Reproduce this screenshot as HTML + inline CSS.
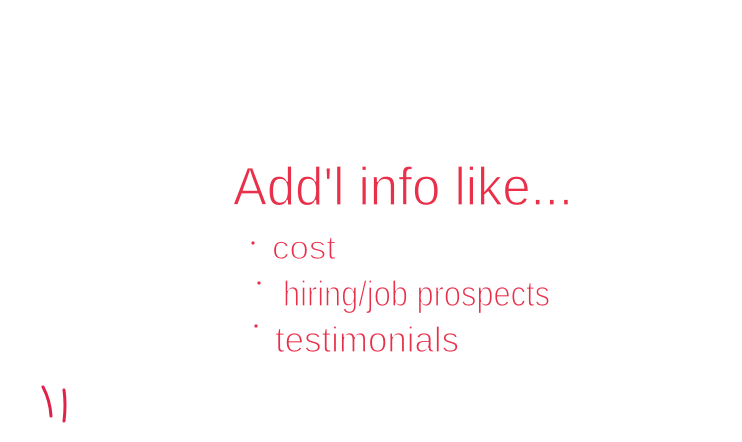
<!DOCTYPE html>
<html><head><meta charset="utf-8"><style>
html,body{margin:0;padding:0;background:#fff;width:742px;height:442px;overflow:hidden}
svg{display:block}
text{font-family:"Liberation Sans",sans-serif;fill:#e8304b;stroke:#fff;stroke-width:1.3}
</style></head><body>
<svg width="742" height="442" viewBox="0 0 742 442">
<text x="233" y="205" font-size="54" textLength="340" lengthAdjust="spacingAndGlyphs">Add'l info like...</text>
<circle cx="253" cy="243" r="1.6" fill="#e8304b"/>
<text x="272" y="259" font-size="33" textLength="64" lengthAdjust="spacingAndGlyphs">cost</text>
<circle cx="259" cy="283" r="1.6" fill="#e8304b"/>
<text x="283" y="306" font-size="36" textLength="267" lengthAdjust="spacingAndGlyphs">hiring/job prospects</text>
<circle cx="256" cy="326" r="1.6" fill="#e8304b"/>
<text x="275" y="352" font-size="36" textLength="184" lengthAdjust="spacingAndGlyphs">testimonials</text>
<path d="M43 387 Q50 400 51 416 M64 390 Q66 405 64 421" stroke="#e0224a" stroke-width="3" fill="none" stroke-linecap="round"/>
</svg>
</body></html>
